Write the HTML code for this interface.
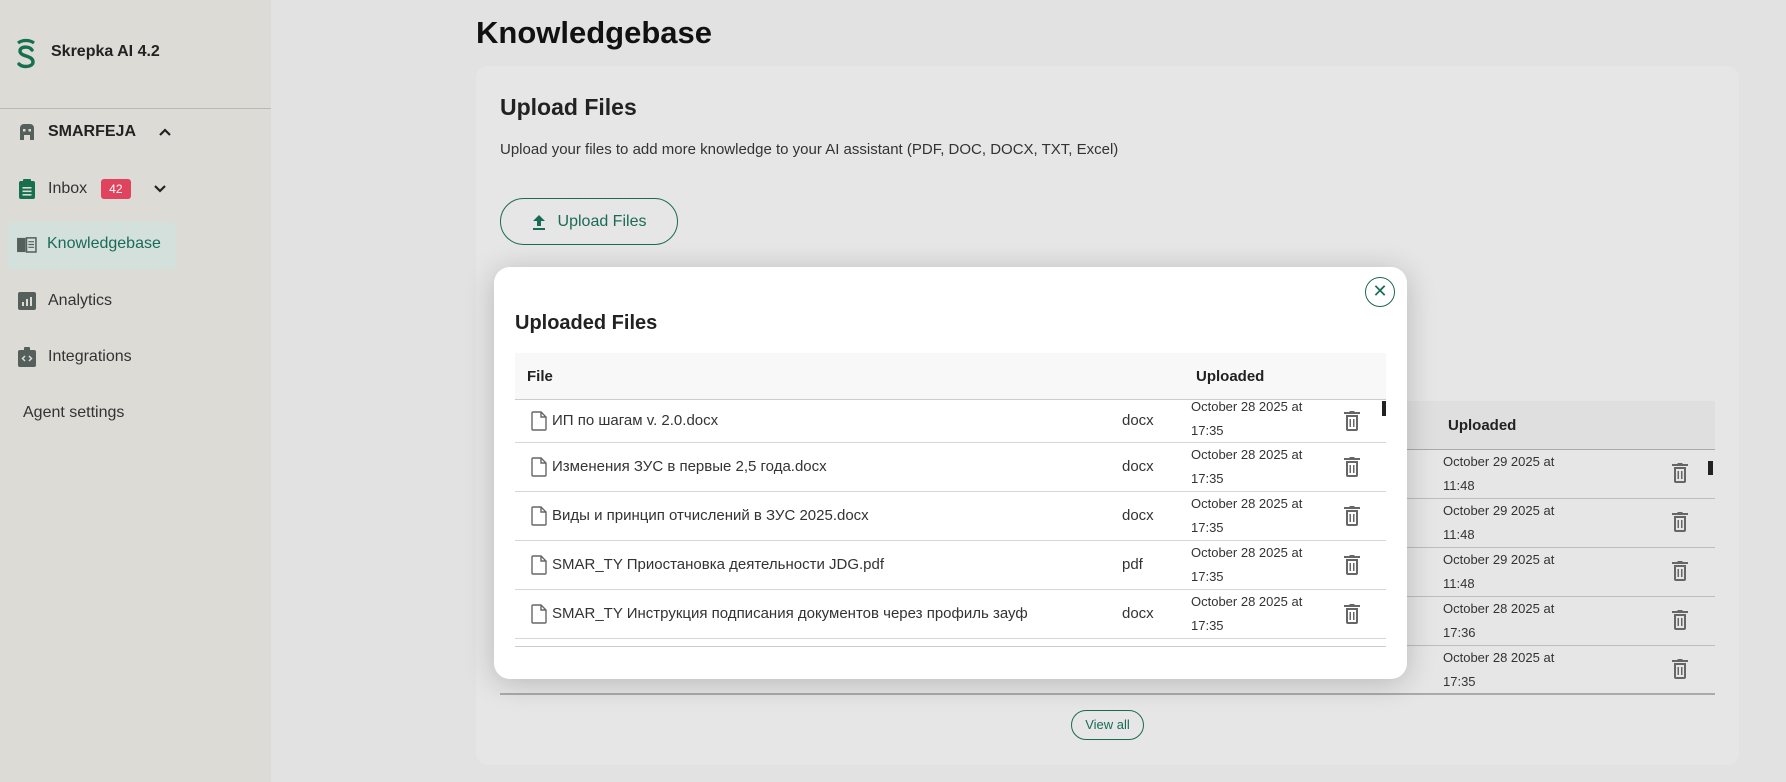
<!DOCTYPE html>
<html><head><meta charset="utf-8"><style>
*{box-sizing:border-box;margin:0;padding:0}
body{width:1786px;height:782px;overflow:hidden;background:#e2e2e2;font-family:"Liberation Sans","Noto Sans CJK SC",sans-serif;color:#2a2a2a;position:relative}
.abs{position:absolute}
.side{left:0;top:0;width:271px;height:782px;background:#dcdbd6}
.nav{position:absolute;left:18px;display:flex;align-items:center;font-size:16px;color:#333}
.nav svg{margin-right:12px}
.card{left:476px;top:66px;width:1263px;height:699px;background:#e6e6e6;border-radius:12px}
.row{position:absolute;left:0;right:0;border-bottom:1px solid #bdbdbd}
.date{position:absolute;font-size:13px;line-height:24px;color:#333}
.modal{left:494px;top:267px;width:913px;height:412px;background:#fff;border-radius:16px;box-shadow:0 4px 30px rgba(0,0,0,.2)}
.mrow{position:absolute;left:21px;width:871px;border-bottom:1px solid #d6d6d6;height:49px}
.mrow .name{position:absolute;left:37px;top:0;line-height:48px;font-size:15px;color:#333;white-space:nowrap}
.mrow .fi{position:absolute;left:16px;top:14px}
.mrow .ext{position:absolute;left:607px;line-height:48px;font-size:15px;color:#333}
.mrow .d{position:absolute;left:676px;top:0;font-size:13px;line-height:24px;color:#333}
.mrow .t{position:absolute;left:828px;top:13px}
.chev{margin-left:22px}
</style></head><body>
<div class="abs side">
 <svg class="abs" style="left:15px;top:34px" width="22" height="36" viewBox="0 0 22 36"><path d="M3 9 A11 8 0 0 1 19 9" fill="none" stroke="#16704f" stroke-width="3.2"/><path d="M17 16 C14 12 5 12 5 17 C5 23 18 21 18 28 C18 33 8 34 4 30" fill="none" stroke="#16704f" stroke-width="3.4" stroke-linecap="round"/></svg>
 <div class="abs" style="left:51px;top:43px;font-size:16px;font-weight:bold;color:#222">Skrepka AI 4.2</div>
 <div class="abs" style="left:0;top:108px;width:271px;height:1px;background:#b8b8b4"></div>
 <div class="nav" style="top:123px;font-weight:bold;color:#222"><svg width="18" height="18" viewBox="0 0 18 18"><path d="M2 17V5a4 4 0 0 1 4-4h6a4 4 0 0 1 4 4v12z" fill="#555f5c"/><rect x="5" y="6" width="2.5" height="2.5" fill="#dcdbd6"/><rect x="10.5" y="6" width="2.5" height="2.5" fill="#dcdbd6"/><rect x="6" y="12" width="6" height="5" fill="#dcdbd6"/></svg>SMARFEJA<svg class="chev" width="14" height="10" viewBox="0 0 14 10"><path d="M2 8l5-5 5 5" fill="none" stroke="#222" stroke-width="2.2"/></svg></div>
 <div class="nav" style="top:178px"><svg width="18" height="22" viewBox="0 0 18 22"><rect x="1" y="3" width="16" height="18" rx="2" fill="#16704f"/><rect x="5" y="1" width="8" height="4" rx="1" fill="#16704f"/><rect x="4.5" y="9" width="9" height="1.6" fill="#dcdbd6"/><rect x="4.5" y="12.5" width="9" height="1.6" fill="#dcdbd6"/><rect x="4.5" y="16" width="9" height="1.6" fill="#dcdbd6"/></svg>Inbox<span style="margin-left:14px;background:#e0435e;color:#fff;font-size:12px;border-radius:3px;padding:3px 8px">42</span><svg class="chev" width="14" height="10" viewBox="0 0 14 10"><path d="M2 2l5 5 5-5" fill="none" stroke="#222" stroke-width="2.2"/></svg></div>
 <div class="abs" style="left:7px;top:222px;width:169px;height:48px;background:#d4e0dc;border-radius:6px"></div>
 <div class="nav" style="top:235px;left:16px;color:#1a6b55"><svg width="21" height="17" viewBox="0 0 22 18" style="margin-right:10px"><path d="M1 2h9v15H1z" fill="#555f5c"/><path d="M11 2h10v15H11z" fill="none" stroke="#555f5c" stroke-width="1.6"/><path d="M13 6h6M13 9h6M13 12h6" stroke="#555f5c" stroke-width="1.2"/></svg>Knowledgebase</div>
 <div class="nav" style="top:292px"><svg width="18" height="18" viewBox="0 0 18 18"><rect width="18" height="18" rx="2" fill="#555f5c"/><path d="M5 14V10M9 14V7M13 14V5" stroke="#dcdbd6" stroke-width="2"/></svg>Analytics</div>
 <div class="nav" style="top:347px"><svg width="18" height="20" viewBox="0 0 18 20"><rect y="3" width="18" height="17" rx="2" fill="#555f5c"/><rect x="6" y="0" width="6" height="5" rx="1" fill="#555f5c"/><path d="M7 9l-2.5 2.5L7 14M11 9l2.5 2.5L11 14" stroke="#dcdbd6" stroke-width="1.5" fill="none"/></svg>Integrations</div>
 <div class="abs" style="left:23px;top:404px;font-size:16px;color:#333">Agent settings</div>
</div>
<div class="abs" style="left:476px;top:15px;font-size:31px;font-weight:bold;color:#111">Knowledgebase</div>
<div class="abs card">
 <div class="abs" style="left:24px;top:28px;font-size:23px;font-weight:bold;color:#222">Upload Files</div>
 <div class="abs" style="left:24px;top:75px;font-size:15px;color:#333">Upload your files to add more knowledge to your AI assistant (PDF, DOC, DOCX, TXT, Excel)</div>
 <div class="abs" style="left:24px;top:132px;width:178px;height:47px;border:1.5px solid #1a6b55;border-radius:24px;display:flex;align-items:center;justify-content:center;font-size:16px;color:#1a6b55"><svg width="14" height="16" viewBox="0 0 14 16" style="margin-right:12px"><path d="M7 1L1 7h4v5h4V7h4zM1 14h12v2H1z" fill="#1a6b55"/></svg>Upload Files</div>
 <div class="abs" style="left:24px;top:335px;width:1215px;height:49px;background:#dfdfdf;border-bottom:1px solid #aaa"></div>
 <div class="abs" style="left:972px;top:351px;font-size:15px;font-weight:bold;color:#222">Uploaded</div>
 <div class="abs" style="left:1232px;top:395px;width:5px;height:14px;background:#222"></div>
 <div class="abs" style="left:24px;top:384px;width:1215px;height:246px">
  <div class="row" style="top:0;height:49px"><div class="date" style="left:943px;top:0">October 29 2025 at<br>11:48</div></div>
  <div class="row" style="top:49px;height:49px"><div class="date" style="left:943px;top:0">October 29 2025 at<br>11:48</div></div>
  <div class="row" style="top:98px;height:49px"><div class="date" style="left:943px;top:0">October 29 2025 at<br>11:48</div></div>
  <div class="row" style="top:147px;height:49px"><div class="date" style="left:943px;top:0">October 28 2025 at<br>17:36</div></div>
  <div class="row" style="top:196px;height:49px;border-bottom:2px solid #aaa"><div class="date" style="left:943px;top:0">October 28 2025 at<br>17:35</div></div>
 </div>
 <svg class="abs" style="left:1195px;top:396px" width="18" height="230" viewBox="0 0 18 230">
  <g fill="#666"><path id="tr" d="M3 5h12v14a2 2 0 0 1-2 2H5a2 2 0 0 1-2-2zM5 7v12h8V7zM6.5 9h1.5v8H6.5zM10 9h1.5v8H10zM1 2h5l1-1h4l1 1h5v2H1z"/></g>
  <use href="#tr" y="49" fill="#666"/><use href="#tr" y="98" fill="#666"/><use href="#tr" y="147" fill="#666"/><use href="#tr" y="196" fill="#666"/>
 </svg>
 <div class="abs" style="left:595px;top:644px;width:73px;height:30px;border:1.5px solid #1a6b55;border-radius:15px;font-size:13px;color:#1a6b55;text-align:center;line-height:27px">View all</div>
</div>
<div class="abs modal">
 <div class="abs" style="left:871px;top:10px;width:30px;height:30px;border:1.5px solid #1a6b55;border-radius:50%;color:#1a6b55;text-align:center;line-height:26px;font-size:18px">✕</div>
 <div class="abs" style="left:21px;top:45px;font-size:20px;font-weight:bold;color:#222">Uploaded Files</div>
 <div class="abs" style="left:21px;top:86px;width:871px;height:47px;background:#f8f8f8;border-bottom:1px solid #ccc"></div>
 <div class="abs" style="left:33px;top:101px;font-size:15px;font-weight:bold;color:#222">File</div>
 <div class="abs" style="left:702px;top:101px;font-size:15px;font-weight:bold;color:#222">Uploaded</div>
 <div class="abs" style="left:888px;top:134px;width:4px;height:15px;background:#222"></div>
 <div class="mrow" style="top:133px;height:43px"><svg class="fi" style="top:11px" width="16" height="20" viewBox="0 0 16 20"><path d="M2 1h8l5 5v12a1 1 0 0 1-1 1H2a1 1 0 0 1-1-1V2a1 1 0 0 1 1-1zM10 1v5h5" fill="none" stroke="#666" stroke-width="1.4"/></svg><div class="name" style="line-height:42px">ИП по шагам v. 2.0.docx</div><div class="ext" style="line-height:42px">docx</div><div class="d" style="top:-5px">October 28 2025 at<br>17:35</div><svg class="t" style="top:10px" width="18" height="22" viewBox="0 0 18 22"><use href="#tr" fill="#666"/></svg></div>
 <div class="mrow" style="top:176px"><svg class="fi" width="16" height="20" viewBox="0 0 16 20"><path d="M2 1h8l5 5v12a1 1 0 0 1-1 1H2a1 1 0 0 1-1-1V2a1 1 0 0 1 1-1zM10 1v5h5" fill="none" stroke="#666" stroke-width="1.4"/></svg><div class="name">Изменения ЗУС в первые 2,5 года.docx</div><div class="ext">docx</div><div class="d">October 28 2025 at<br>17:35</div><svg class="t" width="18" height="22" viewBox="0 0 18 22"><use href="#tr" fill="#666"/></svg></div>
 <div class="mrow" style="top:225px"><svg class="fi" width="16" height="20" viewBox="0 0 16 20"><path d="M2 1h8l5 5v12a1 1 0 0 1-1 1H2a1 1 0 0 1-1-1V2a1 1 0 0 1 1-1zM10 1v5h5" fill="none" stroke="#666" stroke-width="1.4"/></svg><div class="name">Виды и принцип отчислений в ЗУС 2025.docx</div><div class="ext">docx</div><div class="d">October 28 2025 at<br>17:35</div><svg class="t" width="18" height="22" viewBox="0 0 18 22"><use href="#tr" fill="#666"/></svg></div>
 <div class="mrow" style="top:274px"><svg class="fi" width="16" height="20" viewBox="0 0 16 20"><path d="M2 1h8l5 5v12a1 1 0 0 1-1 1H2a1 1 0 0 1-1-1V2a1 1 0 0 1 1-1zM10 1v5h5" fill="none" stroke="#666" stroke-width="1.4"/></svg><div class="name">SMAR_TY Приостановка деятельности JDG.pdf</div><div class="ext">pdf</div><div class="d">October 28 2025 at<br>17:35</div><svg class="t" width="18" height="22" viewBox="0 0 18 22"><use href="#tr" fill="#666"/></svg></div>
 <div class="mrow" style="top:323px"><svg class="fi" width="16" height="20" viewBox="0 0 16 20"><path d="M2 1h8l5 5v12a1 1 0 0 1-1 1H2a1 1 0 0 1-1-1V2a1 1 0 0 1 1-1zM10 1v5h5" fill="none" stroke="#666" stroke-width="1.4"/></svg><div class="name" style="width:530px;overflow:hidden">SMAR_TY Инструкция подписания документов через профиль зауф</div><div class="ext">docx</div><div class="d">October 28 2025 at<br>17:35</div><svg class="t" width="18" height="22" viewBox="0 0 18 22"><use href="#tr" fill="#666"/></svg></div>
 <div class="abs" style="left:21px;top:379px;width:871px;height:1px;background:#ccc"></div>
</div>
</body></html>
